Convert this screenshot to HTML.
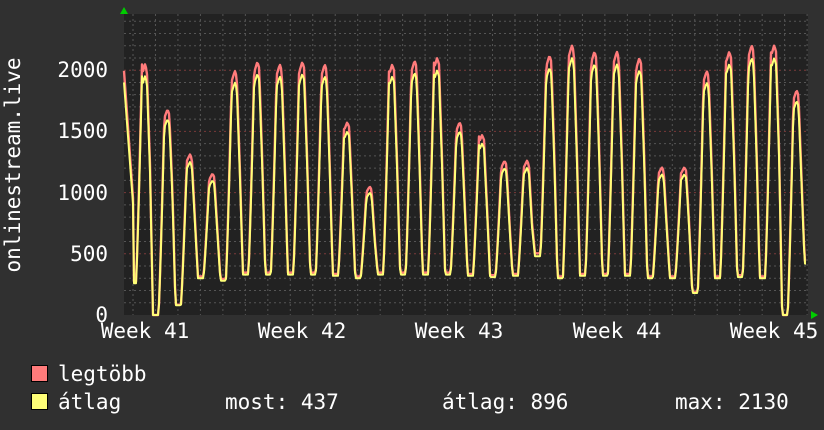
<!DOCTYPE html>
<html><head><meta charset="utf-8"><style>
body{margin:0;background:#303030;width:824px;height:430px;overflow:hidden}
svg{display:block}
text{font-family:"DejaVu Sans Mono","Liberation Mono",monospace;fill:#fff;font-size:21px}
</style></head><body>
<svg id="s" width="824" height="430" xmlns="http://www.w3.org/2000/svg">
<rect x="0" y="0" width="824" height="430" fill="#303030"/>
<rect x="124" y="14" width="684" height="301" fill="#222222"/>
<g id="grid"></g>
<polyline id="red" fill="none" stroke="#ff7b7b" stroke-width="2.4" stroke-linejoin="round"/>
<polyline id="yel" fill="none" stroke="#ffff77" stroke-width="2" stroke-linejoin="round"/>
<polygon points="120,14 128,14 124,7" fill="#00cc00"/>
<polygon points="811,311 811,319 818,315" fill="#00cc00"/>
<text x="108" y="322" text-anchor="end">0</text>
<text x="108" y="261" text-anchor="end">500</text>
<text x="108" y="200" text-anchor="end">1000</text>
<text x="108" y="138" text-anchor="end">1500</text>
<text x="108" y="77" text-anchor="end">2000</text>
<text transform="translate(20,165) rotate(-90)" text-anchor="middle">onlinestream.live</text>
<text x="145" y="338" text-anchor="middle">Week 41</text>
<text x="302" y="338" text-anchor="middle">Week 42</text>
<text x="459" y="338" text-anchor="middle">Week 43</text>
<text x="617" y="338" text-anchor="middle">Week 44</text>
<text x="774" y="338" text-anchor="middle">Week 45</text>
<rect x="31.5" y="365.5" width="16" height="16" fill="#ff7b7b" stroke="#000"/>
<rect x="31.5" y="393.5" width="16" height="16" fill="#ffff77" stroke="#000"/>
<text x="58" y="381">legtöbb</text>
<text x="58" y="409">átlag</text>
<text x="225" y="409">most: 437</text>
<text x="442" y="409">átlag: 896</text>
<text x="675" y="409">max: 2130</text>
</svg>
<script>
var g=document.getElementById('grid'),h='';
for(var v=100;v<=2400;v+=100){var y=315-v*0.1224;var red=v%500==0;
h+='<line x1="124" x2="808" y1="'+y+'" y2="'+y+'" stroke="'+(red?'#7a3a3a':'#555')+'" stroke-dasharray="2,3" stroke-width="1"/>';}
for(var x=133;x<808;x+=22.47){var r=Math.abs(((x-223)%157.3+157.3)%157.3)<3;
h+='<line y1="14" y2="315" x1="'+x+'" x2="'+x+'" stroke="'+(r?'#7a3a3a':'#555')+'" stroke-dasharray="2,3" stroke-width="1"/>';}
g.innerHTML=h;
var peaks=[1950,1600,1250,1100,1900,1970,1950,1970,1950,1500,1000,1950,1980,2000,1500,1400,1200,1200,2020,2100,2050,2050,2000,1150,1150,1900,2050,2100,2100,1750];
var mins=[0,80,300,280,330,330,330,330,320,300,330,330,330,330,320,310,320,480,300,320,320,320,300,300,180,300,310,300,0,420];
function val(x){var d=(x-145)/22.47;var i=Math.round(d);var t=(d-i)*22.47;
 if(i<0){return Math.max(260,1900-(x-124)*110);}
 if(i>29)i=29;var p=peaks[i],m=mins[i],pm=i>0?mins[i-1]:260;
 if(t<-9){return pm;}
 if(t<-3){return pm+(p-pm)*Math.pow((t+9)/6,1.2);}
 if(t<2){return p*(1-0.04*Math.abs(t)/3);}
 if(t<5){return p*0.96-(p*0.96-p*0.6)*(t-2)/3;}
 if(t<8){return p*0.6-(p*0.6-m)*(t-5)/3;}
 return m;}
var ry=[],yy=[];
for(var x=124;x<=806;x+=1){var v=Math.max(0,val(x));
 yy.push(x+','+(315-v*0.1224).toFixed(1));ry.push(x+','+(315-Math.min(2200,v*1.05)*0.1224).toFixed(1));}
document.getElementById('red').setAttribute('points',ry.join(' '));
document.getElementById('yel').setAttribute('points',yy.join(' '));
</script>
</body></html>
